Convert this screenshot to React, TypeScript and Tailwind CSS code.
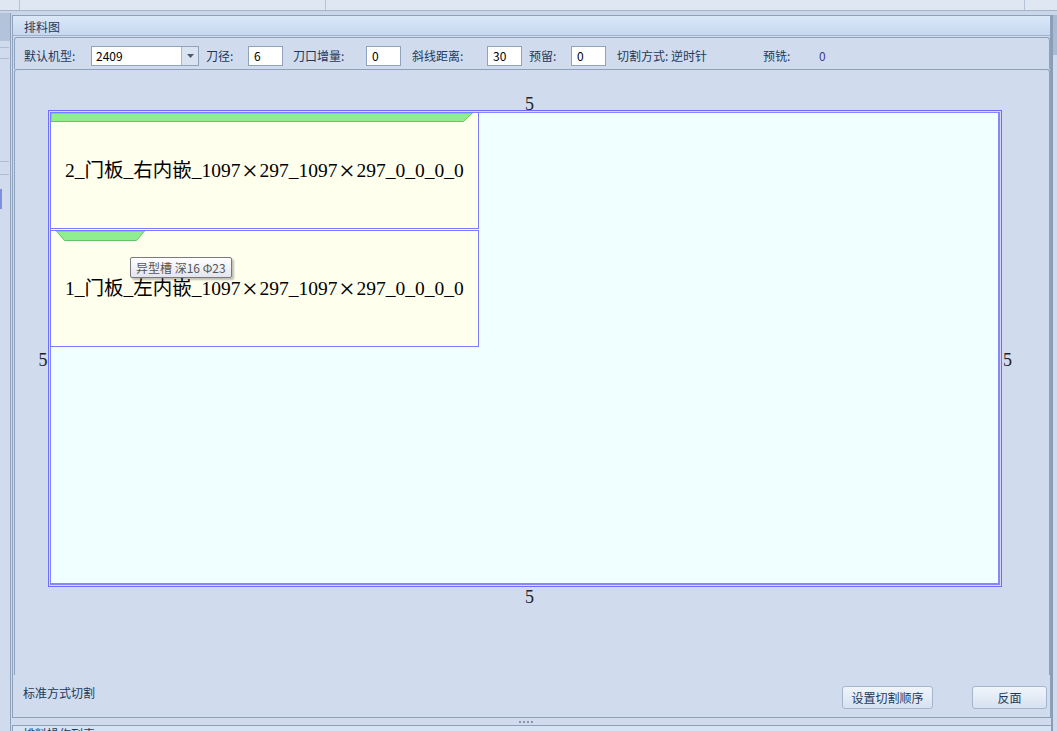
import React from 'react';

/**
 * 排料图 — nesting preview panel: toolbar of cutting params, the sheet
 * canvas with two placed door panels, and the footer actions.
 */

const pieces = [
  { id: 2, name: '2_门板_右内嵌', band: 'full' as const },
  { id: 1, name: '1_门板_左内嵌', band: 'slot' as const },
];

export default function App() {
  return (
    <div className="flex h-[731px] w-[1057px] flex-col overflow-hidden bg-[#d0dcee] font-['Microsoft_YaHei','Noto_Sans_CJK_SC',sans-serif] text-[12px] leading-none text-[#1e395b]">
      <TopStrip />
      <div className="h-[4px] shrink-0 bg-[#cad7e9]" />
      <div className="flex min-h-0 flex-1">
        <LeftRail />
        <div className="ml-px flex w-[1039px] shrink-0 flex-col">
          <MainPanel />
          <Splitter />
          <NextPanel />
        </div>
        <ScrollRail />
      </div>
    </div>
  );
}

function TopStrip() {
  return (
    <div className="flex h-[11px] shrink-0 border-b border-[#a4b4ca] bg-[#dfe7f3]">
      <div className="w-[20px] border-r border-[#b5c3d6]" />
      <div className="w-[306px] border-r border-[#b5c3d6]" />
      <div className="w-[699px] border-r border-[#b5c3d6]" />
      <div className="flex-1" />
    </div>
  );
}

function LeftRail() {
  return (
    <div className="-mt-[2px] flex w-[11px] shrink-0 flex-col border-r border-[#8ea1bb]">
      <div className="h-[28px] bg-[#b3c3d9]" />
      <div className="mt-[6px] h-px w-[9px] bg-[#aebdd2]" />
      <div className="mt-[10px] h-px w-[9px] bg-[#aebdd2]" />
      <div className="mt-[102px] h-px w-[9px] bg-[#aebdd2]" />
      <div className="mt-[12px] h-px w-[9px] bg-[#aebdd2]" />
      <div className="mt-[14px] h-[20px] w-[2px] bg-[#7f8fe0]" />
    </div>
  );
}

function ScrollRail() {
  return (
    <div className="flex w-[6px] shrink-0 flex-col border-l-2 border-[#8b9db6]">
      <div className="h-[40px] bg-[#a9bad1]" />
      <div className="flex-1 bg-[#cfdbeb]" />
    </div>
  );
}

function MainPanel() {
  return (
    <div className="flex h-[703px] shrink-0 flex-col border-b border-l border-r border-t border-[#8ea1bb]">
      <div className="flex h-[20px] shrink-0 items-center border-b border-[#a3b3c9] bg-gradient-to-b from-[#dbe8f8] to-[#c5d7ef] pl-[11px] pt-[3px]">
        排料图
      </div>
      <div className="flex flex-1 flex-col pl-px pt-px">
        <Toolbar />
        <Canvas />
        <Footer />
      </div>
    </div>
  );
}

function Field({ value }: { value: string }) {
  return (
    <div className="flex h-[20px] w-[35px] shrink-0 items-center border border-[#8fa3bf] bg-white pl-[5px] text-black">
      {value}
    </div>
  );
}

function Toolbar() {
  return (
    <div className="flex h-[32px] shrink-0 items-center rounded-t-[3px] border-l border-r border-t border-[#8ea1bb] pl-[9px] pt-[4px]">
      <span className="w-[67px] shrink-0">默认机型:</span>
      <div className="flex h-[20px] w-[108px] shrink-0 border border-[#8fa3bf] bg-white">
        <span className="flex flex-1 items-center pl-[4px] text-black">2409</span>
        <span className="flex w-[17px] items-center justify-center border-l border-[#a8b8ce] bg-[#dae4f1]">
          <svg width="7" height="4" viewBox="0 0 7 4">
            <polygon points="0,0 7,0 3.5,4" fill="#4b5b72" />
          </svg>
        </span>
      </div>
      <span className="ml-[7px] w-[42px] shrink-0">刀径:</span>
      <Field value="6" />
      <span className="ml-[10px] w-[73px] shrink-0">刀口增量:</span>
      <Field value="0" />
      <span className="ml-[11px] w-[75px] shrink-0">斜线距离:</span>
      <Field value="30" />
      <span className="ml-[7px] w-[42px] shrink-0">预留:</span>
      <Field value="0" />
      <span className="ml-[11px] w-[146px] shrink-0">切割方式: 逆时针</span>
      <span className="w-[56px] shrink-0">预铣:</span>
      <span className="text-[#3c3c8c]">0</span>
    </div>
  );
}

function Canvas() {
  const num = "font-['Liberation_Serif',serif] text-[18px] leading-none text-[#222]";
  return (
    <div className="flex h-[606px] shrink-0 flex-col rounded-t-[3px] border-l border-r border-t border-[#8ea1bb] pl-[23px] pt-[25px]">
      <div className={`flex h-[15px] items-start pl-[487px] ${num}`}>5</div>
      <div className="flex">
        <div className={`flex w-[10px] items-center justify-center pt-[22px] ${num}`}>5</div>
        <Sheet />
        <div className={`flex w-[10px] items-center pl-px pt-[22px] ${num}`}>5</div>
      </div>
      <div className={`flex h-[19px] items-end pl-[487px] ${num}`}>5</div>
    </div>
  );
}

function Sheet() {
  return (
    <div className="h-[477px] w-[954px] shrink-0 border border-[#6d6dff] bg-[#d8d8ff] p-px">
      <div className="h-full w-full border-b-2 border-l border-r-2 border-t border-[#8686ff] bg-[#f0ffff]">
        <div className="-ml-px -mt-px flex w-[429px] flex-col gap-px">
          {pieces.map((p) => (
            <Piece key={p.id} name={p.name} band={p.band} />
          ))}
        </div>
      </div>
    </div>
  );
}

// SimSun draws × full width and large; give it a full-width cell
function Times() {
  return <span className="inline-block w-[19px] text-center text-[28px] leading-none">×</span>;
}

function Piece({ name, band }: { name: string; band: 'full' | 'slot' }) {
  return (
    <div className="relative flex h-[117px] flex-col border border-[#7b7bff] bg-[#ffffee]">
      {band === 'full' ? (
        <svg width="422" height="9" className="shrink-0">
          <polygon points="0,0 421.5,0 412.5,8.5 0,8.5" fill="#90ee90" stroke="#65c265" strokeWidth="1" />
        </svg>
      ) : (
        <svg width="89" height="10" className="ml-[5px] shrink-0">
          <polygon points="0.5,0 88.5,0 80.5,9.5 8.5,9.5" fill="#90ee90" stroke="#65c265" strokeWidth="1" />
        </svg>
      )}
      <div className="flex flex-1 items-center whitespace-nowrap pb-[9px] pl-[14px] font-['Liberation_Serif','Noto_Sans_CJK_SC',serif] text-[19.5px] text-black">
        {name}_1097<Times />297_1097<Times />297_0_0_0_0
      </div>
      {band === 'slot' && (
        <div className="absolute left-[79px] top-[26px] flex h-[21px] items-center whitespace-nowrap rounded-[2px] border border-[#7a7a7a] bg-gradient-to-b from-white to-[#e3e5ef] px-[5px] text-[12px] text-[#555] shadow-[2px_2px_2px_rgba(0,0,0,0.25)]">
          异型槽 深16 Φ23
        </div>
      )}
    </div>
  );
}

function Footer() {
  const btn =
    'flex h-[23px] items-center justify-center rounded-[3px] border border-[#a5b5cc] bg-gradient-to-b from-[#f0f5fb] to-[#d6e2f1]';
  return (
    <div className="flex h-[42px] shrink-0 items-start pl-[9px] pt-[11px]">
      <span className="mt-px">标准方式切割</span>
      <div className="flex-1" />
      <div className={`${btn} w-[91px]`}>设置切割顺序</div>
      <div className={`${btn} ml-[39px] mr-[3px] w-[75px]`}>反面</div>
    </div>
  );
}

function Splitter() {
  return (
    <div className="flex h-[7px] shrink-0 items-center justify-center gap-[2px] pr-[12px]">
      {[0, 1, 2, 3].map((i) => (
        <span key={i} className="h-[2px] w-[2px] bg-[#8597b3]" />
      ))}
    </div>
  );
}

function NextPanel() {
  return (
    <div className="flex-1 border-l border-t border-[#8ea1bb] bg-[#d5e3f5] pl-[10px] pt-[2px]">
      排料操作列表
    </div>
  );
}
